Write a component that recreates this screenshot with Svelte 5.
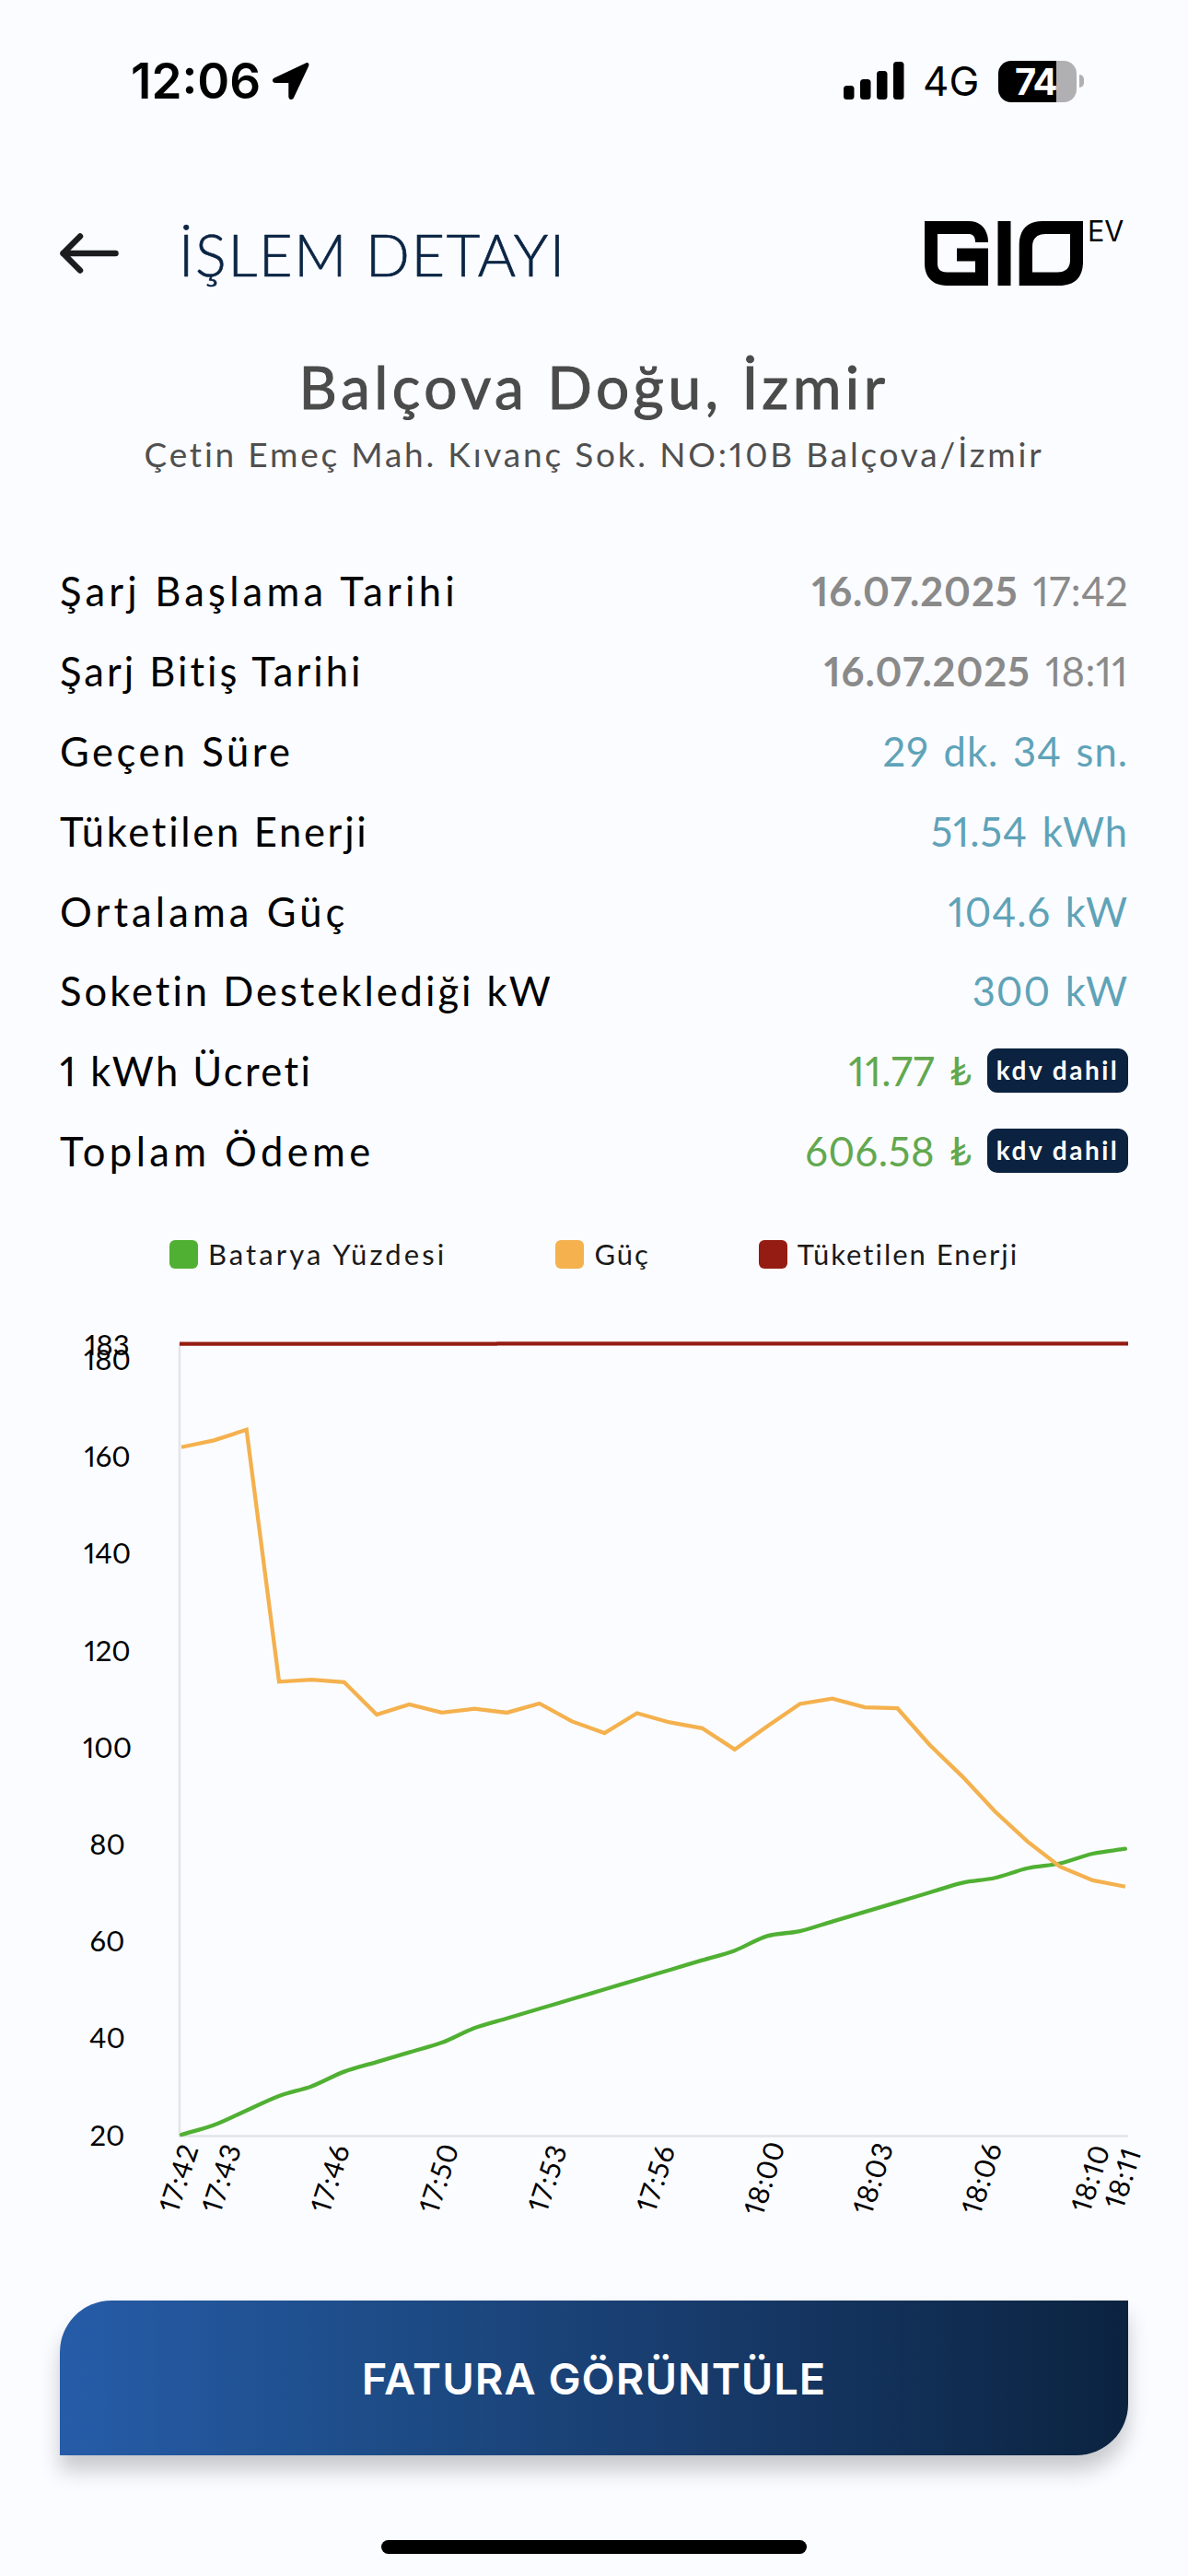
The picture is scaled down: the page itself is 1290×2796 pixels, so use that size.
<script lang="ts">
  type Row = {
    label: string;
    value: string;
    kind: 'date' | 'info' | 'price';
    date?: string;
    tracking: number;
  };

  const rows: Row[] = [
    { label: 'Şarj Başlama Tarihi', date: '16.07.2025', value: '17:42', kind: 'date', tracking: 4.2 },
    { label: 'Şarj Bitiş Tarihi', date: '16.07.2025', value: '18:11', kind: 'date', tracking: 3 },
    { label: 'Geçen Süre', value: '29 dk. 34 sn.', kind: 'info', tracking: 3.5 },
    { label: 'Tüketilen Enerji', value: '51.54 kWh', kind: 'info', tracking: 2.7 },
    { label: 'Ortalama Güç', value: '104.6 kW', kind: 'info', tracking: 4.1 },
    { label: 'Soketin Desteklediği kW', value: '300 kW', kind: 'info', tracking: 3 },
    { label: '1 kWh Ücreti', value: '11.77', kind: 'price', tracking: 2.4 },
    { label: 'Toplam Ödeme', value: '606.58', kind: 'price', tracking: 4.4 }
  ];

  const legend = [
    { name: 'Batarya Yüzdesi', color: 'green', tracking: 3.1 },
    { name: 'Güç', color: 'orange', tracking: 2 },
    { name: 'Tüketilen Enerji', color: 'red', tracking: 2 }
  ];

  const battery = [
    20, 22, 25, 28, 30, 33, 35, 37, 39, 42, 44, 46, 48, 50, 52,
    54, 56, 58, 61, 62, 64, 66, 68, 70, 72, 73, 75, 76, 78, 79
  ];

  const power = [
    161.9, 163.3, 165.5, 113.5, 113.9, 113.4, 106.7, 108.8, 107.1, 107.9,
    107.1, 109, 105.3, 102.9, 107, 105.1, 103.9, 99.5, 104.3, 108.9,
    110, 108.2, 108, 100.4, 93.9, 86.7, 80.5, 75.3, 72.5, 71.2
  ];

  const yTicks = [183, 180, 160, 140, 120, 100, 80, 60, 40, 20];

  const xTicks = [
    { label: '17:42', x: 194 },
    { label: '17:43', x: 240.5 },
    { label: '17:46', x: 358.5 },
    { label: '17:50', x: 476.5 },
    { label: '17:53', x: 594.5 },
    { label: '17:56', x: 712 },
    { label: '18:00', x: 830 },
    { label: '18:03', x: 948 },
    { label: '18:06', x: 1066 },
    { label: '18:10', x: 1184 },
    { label: '18:11', x: 1219 }
  ];

  const px = (i: number) => 197 + i * 35.34;
  const py = (v: number) => 926 - (v - 20) * 5.259;

  const powerPoints = power.map((v, i) => `${px(i)},${py(v)}`).join(' ');

  // smooth curve through every point
  function curve(values: number[]) {
    const slope = (i: number) => {
      const a = Math.max(i - 1, 0);
      const b = Math.min(i + 1, values.length - 1);
      return (py(values[b]) - py(values[a])) / (px(b) - px(a));
    };
    let d = `M${px(0)} ${py(values[0])}`;
    for (let i = 0; i < values.length - 1; i++) {
      const h = (px(i + 1) - px(i)) / 3;
      d += ` C${px(i) + h} ${py(values[i]) + slope(i) * h}`;
      d += ` ${px(i + 1) - h} ${py(values[i + 1]) - slope(i + 1) * h}`;
      d += ` ${px(i + 1)} ${py(values[i + 1])}`;
    }
    return d;
  }
</script>

<div class="screen">
  <div class="status">
    <div class="status-left">
      <span class="time">12:06</span>
      <svg class="location" width="42" height="42" viewBox="0 0 42 42">
        <path d="M37 1.4 3 17.4C-.5 19.2.6 23 4 23H18.3V37.5C18.3 41.6 22.3 42.2 24 39L40 5C41.3 2 39.4.3 37 1.4Z" />
      </svg>
    </div>
    <div class="status-right">
      <svg class="signal" width="66" height="42" viewBox="0 0 66 42">
        <rect x="0" y="26" width="11.500" height="15" rx="3.5" />
        <rect x="18" y="19" width="11.500" height="22" rx="3.5" />
        <rect x="36" y="10" width="11.500" height="31" rx="3.5" />
        <rect x="54" y="0" width="11.500" height="41" rx="3.5" />
      </svg>
      <span class="network">4G</span>
      <div class="battery">
        <div class="battery-body"><span>74</span></div>
        <div class="battery-cap"></div>
      </div>
    </div>
  </div>

  <header>
    <svg class="back" width="64" height="44" viewBox="0 0 64 44">
      <path d="M22 3.5 3.5 22 22 40.5M3.5 22H60.5" />
    </svg>
    <h1>İŞLEM DETAYI</h1>
    <svg class="logo" width="220" height="70" viewBox="0 0 220 70">
      <path
        fill-rule="evenodd"
        d="M0 0H48C61 0 69 9 69 23H55C55 17 53 14 47 14H14V46C14 52 17 55.5 24 55.5H55V43.5H35V29.5H69V70H24C9 70 0 61 0 46Z"
      />
      <rect x="79.5" y="0" width="14" height="70" />
      <path
        fill-rule="evenodd"
        d="M102.7 70V26C102.7 9 112 0 128 0H172V44C172 61 163 70 146 70ZM117 55.5H144C153 55.5 158 51 158 42V14H131C122 14 117 19 117 28Z"
      />
      <text x="177" y="21.500">EV</text>
    </svg>
  </header>

  <h2>Balçova Doğu, İzmir</h2>
  <p class="address">Çetin Emeç Mah. Kıvanç Sok. NO:10B Balçova/İzmir</p>

  <div class="details">
    {#each rows as row}
      <div class="row">
        <span style="letter-spacing: {row.tracking}px">{row.label}</span>
        <span class="value {row.kind}">
          {#if row.date}<b>{row.date}</b>{/if}
          <span>{row.value}</span>
          {#if row.kind === 'price'}
            <span class="lira">₺</span>
            <span class="badge">kdv dahil</span>
          {/if}
        </span>
      </div>
    {/each}
  </div>

  <div class="legend">
    {#each legend as item}
      <div class="legend-item">
        <i class={item.color}></i>
        <span style="letter-spacing: {item.tracking}px">{item.name}</span>
      </div>
    {/each}
  </div>

  <svg class="chart" width="1290" height="1059" viewBox="0 0 1290 1059">
    <path class="axis" d="M195 67V927.5H1225" />

    {#each yTicks as tick}
      <text x="116.5" y={py(tick) + 11.5} text-anchor="middle">{tick}</text>
    {/each}

    {#each xTicks as tick}
      <text
        class="x-tick"
        transform="translate({tick.x} 973) rotate(-72)"
        y="11"
        text-anchor="middle">{tick.label}</text
      >
    {/each}

    <path class="line green" d={curve(battery)} />
    <polyline class="line orange" points={powerPoints} />
    <path class="line red" d="M195 67.7H539L540 67.3H1225" />
  </svg>

  <button>FATURA GÖRÜNTÜLE</button>

  <div class="home"></div>
</div>

<style>
  :global(body) {
    margin: 0;
    background: #fbfcff;
  }

  .screen {
    width: 1290px;
    height: 2796px;
    overflow: hidden;
    display: flex;
    flex-direction: column;
    background: #fbfcff;
    color: #000;
    font-family: Lato, "Open Sans", sans-serif;
    font-variant-numeric: proportional-nums;
  }

  .status {
    flex: none;
    display: flex;
    justify-content: space-between;
    align-items: center;
    height: 176px;
    box-sizing: border-box;
    padding: 0 113px 0 142px;
    font-family: Inter, Roboto, sans-serif;
  }

  .status-left,
  .status-right {
    display: flex;
    align-items: center;
  }

  .time {
    width: 153px;
    font-size: 53px;
    font-weight: 600;
  }

  .signal {
    margin-right: 20px;
  }

  .network {
    width: 82px;
    font-size: 44px;
    font-weight: 400;
    white-space: nowrap;
  }

  .battery {
    display: flex;
    align-items: center;
    gap: 3px;
  }

  .battery-body {
    width: 85px;
    height: 45px;
    border-radius: 14px;
    background: linear-gradient(90deg, #000 63px, #b0b0b2 63px);
    color: #fff;
    font-size: 40px;
    font-weight: 700;
    line-height: 45px;
    text-align: center;
    letter-spacing: -1.5px;
  }

  .battery-body span {
    margin-right: 4px;
  }

  .battery-cap {
    width: 5px;
    height: 14px;
    border-radius: 0 5px 5px 0;
    background: #b0b0b2;
  }

  header {
    flex: none;
    display: flex;
    align-items: center;
    height: 199px;
    box-sizing: border-box;
    padding: 0 66px 0 65px;
  }

  .back {
    margin-bottom: 2px;
  }

  .back path {
    fill: none;
    stroke: #1c1c1e;
    stroke-width: 6.5;
    stroke-linecap: round;
    stroke-linejoin: round;
  }

  h1 {
    margin: 0 0 0 65px;
    color: #0b2545;
    font-size: 63px;
    font-weight: 300;
    letter-spacing: 1.7px;
    -webkit-text-stroke: 0.7px #0b2545;
  }

  .logo {
    margin-left: auto;
    margin-bottom: 2px;
    overflow: visible;
  }

  .logo text {
    font-family: Inter, sans-serif;
    font-size: 30.5px;
  }

  h2 {
    flex: none;
    margin: 5px 0 0;
    color: #4b4b4b;
    font-size: 64px;
    font-weight: 400;
    line-height: 80px;
    text-align: center;
    letter-spacing: 4.5px;
    -webkit-text-stroke: 1px #4b4b4b;
  }

  .address {
    flex: none;
    margin: 3px 0 0;
    color: #505050;
    font-size: 37px;
    line-height: 60px;
    text-align: center;
    letter-spacing: 2.8px;
    white-space: nowrap;
  }

  .details {
    flex: none;
    margin-top: 75px;
    padding: 0 65px;
  }

  .row {
    display: flex;
    justify-content: space-between;
    align-items: center;
    height: 86.8px;
    font-size: 43.5px;
    white-space: nowrap;
  }

  .value {
    display: flex;
    align-items: center;
    gap: 16px;
    letter-spacing: 1px;
  }

  .date {
    color: #8a8a8a;
    letter-spacing: 0.4px;
  }

  .date b {
    font-weight: 700;
    letter-spacing: 0.9px;
  }

  .info {
    color: #5fa3b8;
    word-spacing: 3.5px;
  }

  .price {
    color: #62a84f;
    letter-spacing: 0.6px;
  }

  .lira {
    font-size: 42px;
  }

  .badge {
    width: 153px;
    height: 48px;
    border-radius: 11px;
    background: #0b2341;
    color: #fff;
    font-size: 28px;
    font-weight: 700;
    line-height: 46px;
    text-align: center;
    letter-spacing: 2.5px;
  }

  .legend {
    flex: none;
    display: flex;
    justify-content: center;
    align-items: center;
    gap: 118px;
    height: 60px;
    margin-top: 39px;
    color: #1a1a1a;
    font-size: 31px;
  }

  .legend-item {
    display: flex;
    align-items: center;
    gap: 11px;
  }

  .legend i {
    width: 31px;
    height: 31px;
    border-radius: 6px;
  }

  .legend .green {
    background: #50b033;
  }

  .legend .orange {
    background: #f4b14e;
  }

  .legend .red {
    background: #951c12;
  }

  .chart {
    flex: none;
    display: block;
    font-size: 31px;
  }

  .x-tick {
    font-size: 30.5px;
    letter-spacing: 1px;
  }

  .axis {
    fill: none;
    stroke: #e3e4e7;
    stroke-width: 2.5;
  }

  .line {
    fill: none;
    stroke-width: 4.3;
  }

  .line.green {
    stroke: #50b033;
    stroke-linecap: round;
  }

  .line.orange {
    stroke: #f4b14e;
  }

  .line.red {
    stroke: #951c12;
  }

  button {
    flex: none;
    width: 1160px;
    height: 168px;
    margin: 47px 65px 0;
    border: none;
    border-radius: 56px 0 56px 0;
    background: linear-gradient(90deg, #265ca8 0%, #1d4c87 30%, #183c6d 58%, #0b2340 100%);
    box-shadow: 0 17px 22px rgba(0, 0, 0, 0.2);
    color: #fff;
    font-family: Inter, sans-serif;
    font-size: 47px;
    font-weight: 600;
    letter-spacing: 1px;
  }

  .home {
    flex: none;
    width: 462px;
    height: 15px;
    margin: 91.5px auto 0;
    border-radius: 8px;
    background: #000;
  }
</style>
